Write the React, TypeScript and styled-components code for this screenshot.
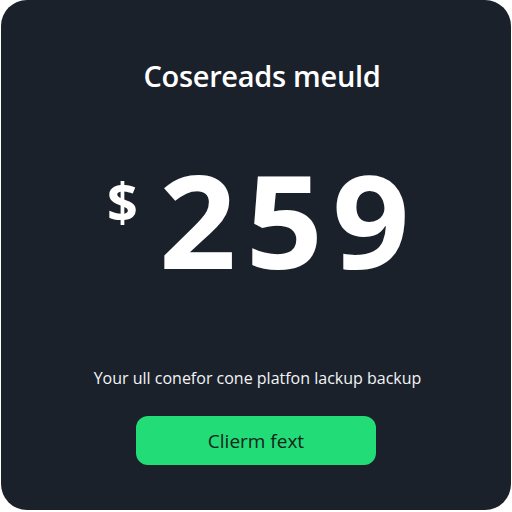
import React from 'react';
import styled, { createGlobalStyle } from 'styled-components';

const GlobalStyle = createGlobalStyle`
  html, body {
    margin: 0;
    padding: 0;
    background: #ffffff;
  }
  body {
    font-family: "Open Sans", "Noto Sans", sans-serif;
  }
`;

const Card = styled.div`
  box-sizing: border-box;
  width: 510px;
  height: 510px;
  margin: 0 1px;
  border-radius: 26px;
  background: #1b212b;
  display: flex;
  flex-direction: column;
  align-items: center;
  padding-top: 58px;
`;

const Title = styled.h1`
  margin: 0;
  font-size: 29px;
  font-weight: 600;
  color: #ffffff;
  letter-spacing: -0.3px;
  line-height: 36px;
  padding-left: 12px;
`;

const PriceRow = styled.div`
  display: flex;
  align-items: flex-start;
  margin-top: 70px;
  gap: 26px;
`;

const Currency = styled.span`
  font-size: 54px;
  font-weight: 700;
  color: #ffffff;
  line-height: 1;
  margin-top: 10px;
`;

const Amount = styled.span`
  font-size: 130px;
  font-weight: 700;
  color: #ffffff;
  line-height: 110px;
  letter-spacing: 9px;
  margin-right: -9px;
  transform: scaleX(1.04);
`;

const Subtitle = styled.p`
  margin: 92px 0 0;
  font-size: 16px;
  color: #f2f4f6;
  line-height: 24px;
  padding-left: 3px;
`;

const ActionButton = styled.button`
  margin-top: 26px;
  width: 240px;
  height: 49px;
  border: none;
  border-radius: 12px;
  background: #22dc78;
  color: #10251a;
  font-family: "Open Sans", "Noto Sans", sans-serif;
  font-size: 19px;
  cursor: pointer;
`;

export default function App() {
  return (
    <>
      <GlobalStyle />
      <Card>
        <Title>Cosereads meuld</Title>
        <PriceRow>
          <Currency>$</Currency>
          <Amount>259</Amount>
        </PriceRow>
        <Subtitle>Your ull conefor cone platfon lackup backup</Subtitle>
        <ActionButton>Clierm fext</ActionButton>
      </Card>
    </>
  );
}
